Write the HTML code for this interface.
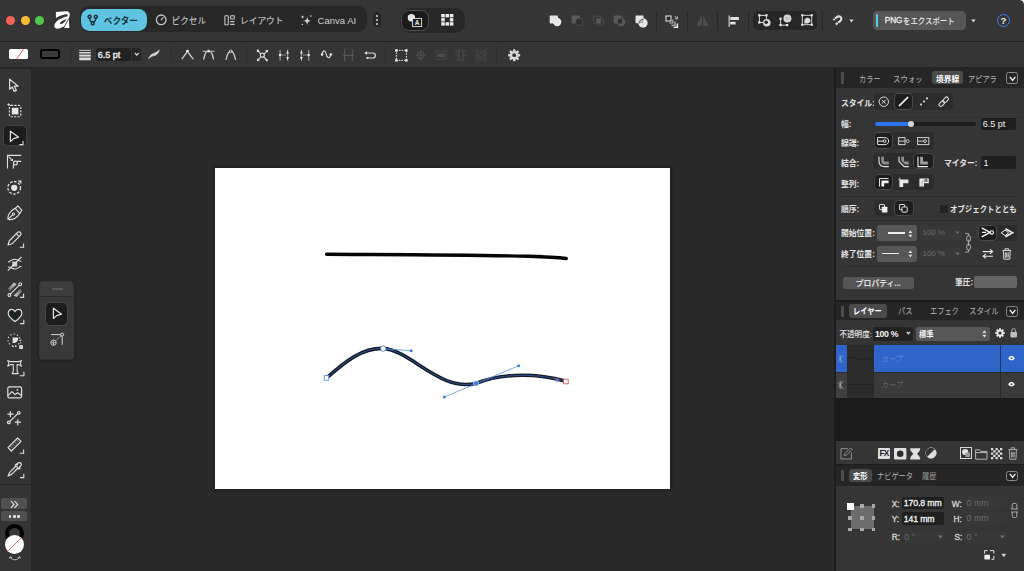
<!DOCTYPE html>
<html lang="ja">
<head>
<meta charset="utf-8">
<title>Affinity</title>
<style>
*{box-sizing:border-box;margin:0;padding:0}
html,body{width:1024px;height:571px;overflow:hidden;background:#292929}
body{position:relative;font-family:"Liberation Sans","Noto Sans CJK JP",sans-serif;font-size:9px;color:#d8d8d8;line-height:1}
.a{position:absolute}
.t{position:absolute;white-space:nowrap;line-height:12px;height:12px}
.b{font-weight:bold}
svg{position:absolute;overflow:visible}
#titlebar{left:0;top:0;width:1024px;height:41.7px;background:#353535;border-bottom:1.5px solid #242424}
#ctx{left:0;top:41.7px;width:1024px;height:26.8px;background:#353535;border-bottom:1.3px solid #252525}
#ltool{left:0;top:68.5px;width:32px;height:502.5px;background:#343434;border-right:1px solid #262626}
#canvas{left:31px;top:68px;width:805px;height:503px;background:#292929}
#page{left:215px;top:167.5px;width:454.6px;height:321.7px;background:#fff;box-shadow:0 0 3px 1px rgba(0,0,0,.3)}
#rp{left:835.7px;top:68px;width:188.3px;height:503px;background:#353535}
.sep{position:absolute;width:1px;background:#272727}
.ph{position:absolute;left:835.7px;width:188.3px;background:#252525}
.tabsel{position:absolute;background:#4a4a4a;border-radius:3px}
.grp{position:absolute;background:#2c2c2c;border-radius:4px}
.sel{position:absolute;background:#1d1d1d;border:1px solid #494949;border-radius:4px}
.inp{position:absolute;background:#222;border-radius:2px}
.dd{position:absolute;background:#575757;border-radius:2.5px}
.hl{position:absolute;height:1px;background:#3e3e3e}
.tb{font-size:8.4px;transform:scaleX(.86);transform-origin:0 50%}
.lb{font-size:8.4px;transform:scaleX(.93);transform-origin:0 50%;font-weight:bold;color:#e2e2e2}
.mb{width:11.8px;height:11.6px;border:1px solid #8a8a8a;border-radius:2.5px}
.ad{width:3.6px;height:3.6px;background:#a8a8a8}
.md{-webkit-text-stroke:0.3px currentColor}
</style>
</head>
<body>
<div class="a" id="titlebar"></div>
<div class="a" id="ctx"></div>
<div class="a" id="canvas"></div>
<div class="a" id="ltool"></div>
<div class="a" id="rp"></div>
<div class="a" id="page"></div>
<!--TITLEBAR-->
<!-- traffic lights -->
<div class="a" style="left:6.3px;top:15.5px;width:9px;height:9px;border-radius:50%;background:#f8625a"></div>
<div class="a" style="left:20.6px;top:15.5px;width:9px;height:9px;border-radius:50%;background:#fbbd34"></div>
<div class="a" style="left:34.8px;top:15.5px;width:9px;height:9px;border-radius:50%;background:#50c84b"></div>
<!-- logo -->
<svg style="left:50px;top:8px" width="25" height="24" viewBox="0 0 25 24">
 <g fill="#fff">
  <path d="M5.9 3.9L16.2 3.3C18.9 3.2 20.1 5 19.7 7.2 19.5 8.6 19 9.8 18.5 10.8L17.3 9.9C17.7 8.8 17.8 8 17.7 7.4 17.5 6.2 16.6 6 15.2 6.3 12 7 8.6 8.5 5.9 9.9Z"/>
  <path fill-rule="evenodd" d="M18.2 8.2C14.6 8.6 9.5 10.5 6.5 13.5 4.4 15.6 3.8 18.2 5 19.7 6.2 21.1 8.6 20.9 11 19.7 12.2 19.1 13.1 18.5 13.7 18.9L18.5 10.2ZM16.4 11.3C14 11.7 11.5 13 10.3 14.6 9.6 15.7 10.2 16.5 11.6 16 13.6 15.2 15.4 13.4 16.4 11.3Z"/>
  <path d="M18.9 10.9L19.3 19.9H14Z"/>
 </g>
</svg>
<!-- persona group -->
<div class="a" style="left:80px;top:6.4px;width:287px;height:25.8px;border-radius:9px;background:#272727"></div>
<div class="a" style="left:81.3px;top:9px;width:65.5px;height:22px;border-radius:8.5px;background:#5ec4e2"></div>
<svg style="left:86px;top:13px" width="14" height="14" viewBox="0 0 14 14" fill="none" stroke="#0f2a33" stroke-width="1.45">
 <circle cx="3.6" cy="3.7" r="1.5"/><circle cx="9.8" cy="3.7" r="1.5"/><circle cx="6.7" cy="10.2" r="1.5"/>
 <path d="M3.4 5.2C3.6 7.4 4.8 8.4 5.8 9M10 5.2C9.8 7.4 8.6 8.4 7.6 9"/>
</svg>
<div class="t b" style="left:103.8px;top:15px;color:#12303a;font-size:8.6px">ベクター</div>
<svg style="left:155px;top:14px" width="12" height="12" viewBox="0 0 12 12" fill="none" stroke="#c4c4c4" stroke-width="1.3">
 <circle cx="6.2" cy="5.8" r="4.8"/><path d="M6.2 5.8L8.2 3.6" stroke-linecap="round" stroke-width="1.1"/>
</svg>
<div class="t" style="left:171.6px;top:15px;color:#bababa;font-size:8.6px;font-weight:500">ピクセル</div>
<svg style="left:224px;top:14.5px" width="12" height="11" viewBox="0 0 12 11" fill="none" stroke="#c4c4c4" stroke-width="1.1">
 <rect x="0.9" y="0.8" width="3.4" height="9" rx="0.6"/><rect x="6.6" y="0.8" width="3.6" height="3.2" rx="0.5"/><path d="M6.2 6.6H10.6M6.2 9.4H10.6"/>
</svg>
<div class="t" style="left:240px;top:15px;color:#bababa;font-size:8.7px;font-weight:500">レイアウト</div>
<svg style="left:300px;top:13.5px" width="13" height="13" viewBox="0 0 13 13" fill="#d4d4d4">
 <path d="M7.2 2.4C7.7 5.6 8.4 6.3 11.6 6.8 8.4 7.3 7.7 8 7.2 11.2 6.7 8 6 7.3 2.8 6.8 6 6.3 6.7 5.6 7.2 2.4Z"/>
 <path d="M2.6 0.8C2.8 2.4 3.1 2.7 4.7 2.9 3.1 3.1 2.8 3.4 2.6 5 2.4 3.4 2.1 3.1 0.5 2.9 2.1 2.7 2.4 2.4 2.6 0.8Z"/>
 <circle cx="10.8" cy="2" r="0.8"/><circle cx="2.4" cy="10.6" r="0.75"/>
</svg>
<div class="t" style="left:317.6px;top:14.6px;color:#d0d0d0;font-size:9.5px">Canva AI</div>
<div class="a" style="left:373px;top:12px;width:8.4px;height:15.4px;border-radius:4px;background:#272727"></div>
<div class="a" style="left:376px;top:14.5px;width:2.4px;height:2.4px;border-radius:50%;background:#d8d8d8"></div>
<div class="a" style="left:376px;top:18.8px;width:2.4px;height:2.4px;border-radius:50%;background:#d8d8d8"></div>
<div class="a" style="left:376px;top:23.1px;width:2.4px;height:2.4px;border-radius:50%;background:#d8d8d8"></div>
<!-- group 2 -->
<div class="a" style="left:400px;top:7.5px;width:64.5px;height:25.3px;border-radius:10px;background:#272727"></div>
<div class="a" style="left:401.4px;top:9.7px;width:27.6px;height:21.2px;border-radius:7.5px;background:#1b1b1b;border:1px solid #505050"></div>
<svg style="left:406px;top:13px" width="17" height="15" viewBox="0 0 17 15">
 <circle cx="5.4" cy="4.8" r="3.7" fill="#e4e4e4"/>
 <rect x="6.6" y="5.4" width="9" height="8.2" fill="#1b1b1b" stroke="#e4e4e4" stroke-width="0.9"/>
 <text x="11.1" y="12.2" font-size="6.5" font-weight="bold" fill="#e4e4e4" text-anchor="middle" font-family="Liberation Sans, sans-serif">A</text>
</svg>
<svg style="left:441.2px;top:14.3px" width="12.6" height="11.8" viewBox="0 0 13.4 12.6" fill="#ececec">
 <rect x="0.2" y="0" width="3.8" height="3.6"/><rect x="4.8" y="0" width="3.8" height="3.6"/><rect x="9.4" y="0" width="3.8" height="3.6"/>
 <rect x="0.2" y="4.4" width="3.8" height="3.6"/><rect x="9.4" y="4.4" width="3.8" height="3.6"/>
 <rect x="0.2" y="8.8" width="3.8" height="3.6"/><rect x="4.8" y="8.8" width="3.8" height="3.6"/><rect x="9.4" y="8.8" width="3.8" height="3.6"/>
</svg>
<!-- boolean ops -->
<svg style="left:549px;top:14.5px" width="13" height="12" viewBox="0 0 13 12" fill="#e6e6e6"><rect x="0.7" y="0.6" width="8.2" height="8" rx="0.8"/><circle cx="8.2" cy="7" r="4.2"/></svg>
<svg style="left:570.5px;top:14.5px" width="13" height="12" viewBox="0 0 13 12"><rect x="0.7" y="0.6" width="8.2" height="8" rx="0.8" fill="#5a5a5a"/><circle cx="8.2" cy="7" r="3.7" fill="#2e2e2e" stroke="#4a4a4a" stroke-width="1"/></svg>
<svg style="left:591.5px;top:14.5px" width="13" height="12" viewBox="0 0 13 12" fill="none" stroke="#4a4a4a" stroke-width="1"><rect x="1.2" y="1.1" width="7.4" height="7.2" rx="0.6"/><circle cx="8.2" cy="7" r="3.7"/><path d="M4.6 3.4H8.6V8.3H4.8C4.2 6.2 4.2 4.8 4.6 3.4Z" fill="#5a5a5a" stroke="none"/></svg>
<svg style="left:613px;top:14.5px" width="13" height="12" viewBox="0 0 13 12"><defs><clipPath id="cpx"><rect x="0.7" y="0.6" width="8.2" height="8" rx="0.8"/></clipPath></defs><rect x="0.7" y="0.6" width="8.2" height="8" rx="0.8" fill="#585858"/><circle cx="8.2" cy="7" r="4.2" fill="#585858"/><circle cx="8.2" cy="7" r="3.4" fill="#2c2c2c" clip-path="url(#cpx)"/></svg>
<svg style="left:634.5px;top:14.5px" width="14" height="13" viewBox="0 0 14 13"><defs><clipPath id="cpd"><rect x="0.5" y="0.5" width="8" height="7.8"/></clipPath><clipPath id="cpe"><circle cx="8" cy="8" r="4.7"/></clipPath></defs><rect x="0.5" y="0.5" width="8" height="7.8" rx="0.6" fill="#e4e4e4"/><circle cx="8" cy="8" r="4.7" fill="#e4e4e4"/><circle cx="8" cy="8" r="3.7" fill="none" stroke="#3a3a3a" stroke-width="0.9" clip-path="url(#cpd)"/><path d="M3 7.4H7.6V3" fill="none" stroke="#8a8a8a" stroke-width="0.8" clip-path="url(#cpe)"/></svg>
<div class="sep" style="left:656px;top:10.5px;height:20.5px"></div>
<svg style="left:665px;top:14.5px" width="14" height="13" viewBox="0 0 14 13" fill="none" stroke="#dcdcdc" stroke-width="1.1"><rect x="1" y="1" width="5" height="5" fill="#2a2a2a"/><path d="M7.8 4.4V8H4.2" stroke="#bdbdbd"/><path d="M10 6.6V10.2H6.4" stroke="#cfcfcf"/><path d="M12.4 8.4V12.2H8.6" stroke="#ececec" stroke-width="1.5"/><path d="M9.4 0.8L12.2 3.6M12.4 1.4V3.8H10" stroke-width="0.9" stroke="#cfcfcf"/></svg>
<div class="sep" style="left:687px;top:10.5px;height:20.5px"></div>
<svg style="left:696px;top:15px" width="13" height="11" viewBox="0 0 13 11" fill="#4e4e4e"><path d="M5.8 0.2V10.8H0.4ZM7.2 0.2V10.8H12.6Z"/></svg>
<div class="sep" style="left:717px;top:10.5px;height:20.5px"></div>
<svg style="left:727.5px;top:14.5px" width="12" height="12" viewBox="0 0 12 12" fill="#e0e0e0"><rect x="0.6" y="0.4" width="1.1" height="11.4"/><rect x="2.2" y="2" width="8.8" height="3" rx="0.4"/><rect x="2.2" y="6.8" width="5.4" height="2.8" rx="0.4"/></svg>
<div class="sep" style="left:748px;top:10.5px;height:20.5px"></div>
<div class="a" style="left:753px;top:10.8px;width:64.4px;height:19.4px;border-radius:5px;background:#262626"></div>
<svg style="left:757.5px;top:14px" width="13" height="13" viewBox="0 0 13 13" fill="none" stroke="#d8d8d8" stroke-width="1"><rect x="1.4" y="1.4" width="7" height="7"/><g fill="#e8e8e8" stroke="none"><rect x="0.2" y="0.2" width="2.2" height="2.2"/><rect x="7.4" y="0.2" width="2.2" height="2.2"/><rect x="0.2" y="7.4" width="2.2" height="2.2"/></g><circle cx="8.8" cy="8.8" r="3.8" fill="#d8d8d8" stroke="none"/><circle cx="8.2" cy="8.2" r="1.8" fill="#262626" stroke="none"/></svg>
<svg style="left:779px;top:14px" width="13" height="13" viewBox="0 0 13 13" fill="none" stroke="#d8d8d8" stroke-width="1"><path d="M1.6 4.6V11.2H8.2"/><g fill="#e8e8e8" stroke="none"><rect x="0.4" y="3.6" width="2.2" height="2.2"/><rect x="0.4" y="10" width="2.2" height="2.2"/><rect x="7" y="10" width="2.2" height="2.2"/></g><circle cx="8.4" cy="4.4" r="4" fill="#d8d8d8" stroke="none"/><path d="M6 3.6H10.8M6 5.2H10.8" stroke="#aaa" stroke-width="0.6"/></svg>
<svg style="left:800.5px;top:14.4px" width="12.2" height="12.2" viewBox="0 0 13 13" fill="none" stroke="#d8d8d8" stroke-width="1"><rect x="1.4" y="1.4" width="10" height="10"/><g fill="#e8e8e8" stroke="none"><rect x="0.2" y="0.2" width="2.2" height="2.2"/><rect x="10.4" y="0.2" width="2.2" height="2.2"/><rect x="0.2" y="10.4" width="2.2" height="2.2"/><rect x="10.4" y="10.4" width="2.2" height="2.2"/></g><path d="M3.6 10V7.2C3.6 5.2 5.2 4 7 4 8.8 4 10 5.2 10 7 10 8.8 8.8 10 7 10Z" fill="#d8d8d8" stroke="none"/></svg>
<div class="sep" style="left:822px;top:10.5px;height:20.5px"></div>
<svg style="left:831.5px;top:15px" width="12" height="11" viewBox="0 0 12 11" fill="none" stroke="#dcdcdc" stroke-width="2.1"><path d="M3.8 9.4L7.9 6.3C9.6 5 9.8 3.2 8.6 2.1 7.4 1 5.8 1.2 4.4 2.4L1.4 5"/><path d="M2.2 2.9L3.9 4.9M5.3 7L7 9" stroke="#2e2e2e" stroke-width="0.8"/></svg>
<svg style="left:849.4px;top:18.8px" width="5" height="4" viewBox="0 0 5 4" fill="#d4d4d4"><path d="M0.200 0.500H4.600L2.400 3.600Z"/></svg>
<!-- export -->
<div class="a" style="left:872.8px;top:11px;width:93.2px;height:19.2px;border-radius:4.5px;background:#565656"></div>
<div class="a" style="left:875.8px;top:13.6px;width:2.6px;height:13.6px;border-radius:1px;background:#4fd2ea"></div>
<div class="t md" style="left:884.7px;top:14.8px;color:#ececec;font-size:8.2px">PNG</div>
<div class="t" style="left:903px;top:14.8px;color:#ececec;font-size:8.4px;font-weight:500;transform:scaleX(.885);transform-origin:0 50%">をエクスポート</div>
<svg style="left:970.6px;top:18.8px" width="5" height="4" viewBox="0 0 5 4" fill="#d4d4d4"><path d="M0.200 0.500H4.600L2.400 3.600Z"/></svg>
<div class="a" style="left:996.6px;top:13.8px;width:13.4px;height:13.4px;border-radius:50%;border:1.6px solid #3b7ce2"></div>
<div class="t b" style="left:997px;top:14.6px;width:12.6px;text-align:center;color:#f0f0f0;font-size:9.5px">?</div>
<div class="a" style="left:1020px;top:0;width:4px;height:4px;background:radial-gradient(circle at 0 100%,rgba(255,255,255,0) 3.3px,#fff 4.3px)"></div>
<!--/TITLEBAR-->
<!--CTX-->
<div class="a" style="left:9.1px;top:49px;width:19.4px;height:10px;border-radius:1.5px;background:#fff;overflow:hidden"></div>
<svg style="left:9px;top:49px" width="20" height="10" viewBox="0 0 20 10"><path d="M7.4 10.4L14.8 -0.4" stroke="#e8453c" stroke-width="0.9"/></svg>
<div class="a" style="left:40.4px;top:49.2px;width:19.8px;height:10px;border-radius:2.4px;background:#3a3a3a;border:2.5px solid #000"></div>
<div class="sep" style="left:70px;top:46px;height:17px;background:#2c2c2c"></div>
<svg style="left:79px;top:49px" width="12" height="12" viewBox="0 0 12 12" fill="#dcdcdc">
 <rect x="0.2" y="0.9" width="11.6" height="0.9"/><rect x="0.2" y="3" width="11.6" height="1.5"/><rect x="0.2" y="5.6" width="11.6" height="2"/><rect x="0.2" y="8.6" width="11.6" height="2.6" rx="0.4"/>
</svg>
<div class="inp" style="left:95.6px;top:47.8px;width:35.6px;height:13px;background:#212121"></div>
<div class="a" style="left:131.8px;top:47.8px;width:9px;height:13px;background:#262626;border-radius:0 2px 2px 0"></div>
<div class="t" style="left:97.8px;top:48.6px;color:#f0f0f0;font-size:9px;-webkit-text-stroke:0.35px #f0f0f0">6.5 pt</div>
<svg style="left:133.5px;top:52px" width="6" height="5" viewBox="0 0 6 5" fill="none" stroke="#d8d8d8" stroke-width="1.2"><path d="M0.9 1L2.8 3.1 4.7 1"/></svg>
<svg style="left:148px;top:49px" width="12" height="11" viewBox="0 0 12 11"><path d="M0.5 9.8C2.4 5.2 4.4 5 6.2 4.2 8.2 3.4 9.8 2.6 11.3 0.8 10.8 4 9.2 5.5 7.2 6.3 5.2 7.100 3 7 0.5 9.8Z" fill="#d4d4d4" stroke="#d4d4d4" stroke-width="0.6" stroke-linejoin="round"/></svg>
<div class="sep" style="left:171px;top:46px;height:17px;background:#2c2c2c"></div>
<!-- node type icons -->
<svg style="left:181px;top:49px" width="13" height="12" viewBox="0 0 13 12" fill="none" stroke="#cacaca" stroke-width="1.35" stroke-linecap="round"><path d="M5.4 4L1.1 9.7M7.6 4L11.9 9.7"/><circle cx="6.5" cy="2.2" r="1.45" fill="#ececec" stroke="none"/></svg>
<svg style="left:202px;top:49px" width="14" height="12" viewBox="0 0 14 12" fill="none" stroke="#cacaca" stroke-width="1.35" stroke-linecap="round"><path d="M4.2 3.2C2.8 5 2.2 7.4 1.8 10M9 3.2C10.400 5 11 7.4 11.4 10"/><path d="M1.200 2.200H4.600M8.600 2.200H12.200" stroke-width="1.1"/><circle cx="6.6" cy="2.2" r="1.4" fill="#ececec" stroke="none"/></svg>
<svg style="left:224.5px;top:49px" width="12" height="12" viewBox="0 0 12 12" fill="none" stroke="#cacaca" stroke-width="1.35" stroke-linecap="round"><path d="M1.100 10.4C2 6.600 3.200 3.400 4.600 2.600M10.500 10.4C9.600 6.600 8.400 3.400 7 2.600"/><circle cx="5.8" cy="2.2" r="1.3" stroke-width="1"/></svg>
<div class="sep" style="left:246px;top:46px;height:17px;background:#2c2c2c"></div>
<svg style="left:256px;top:48.5px" width="13" height="13" viewBox="0 0 13 13" fill="none" stroke="#d8d8d8" stroke-width="1.1"><path d="M2 1.9L10.7 11M11.2 1.8L1.7 11.2"/><circle cx="6.3" cy="6.2" r="2" fill="#333" stroke-width="1.2"/><circle cx="1.9" cy="1.8" r="1.2" fill="#e8e8e8" stroke="none"/><circle cx="10.7" cy="11.1" r="1.2" fill="#e8e8e8" stroke="none"/><path d="M12.2 0.8L9.2 1.6 11.4 3.8ZM0.8 12.2L1.6 9.2 3.8 11.4Z" fill="#e8e8e8" stroke="none"/></svg>
<svg style="left:278px;top:48.5px" width="12" height="13" viewBox="0 0 12 13" fill="none" stroke="#d0d0d0" stroke-width="1"><path d="M2.1 0.8V11.8M9.6 0.8V11.8" stroke="#a8a8a8"/><path d="M2.1 6H8" stroke="#8a8a8a"/><circle cx="2.1" cy="6" r="1.2" fill="#e8e8e8" stroke="none"/><path d="M9.6 1.6L11 4.6H8.2ZM9.6 11L11 8H8.2Z" fill="#ececec" stroke="none"/></svg>
<svg style="left:299px;top:48.5px" width="12" height="13" viewBox="0 0 12 13" fill="none" stroke="#d0d0d0" stroke-width="1"><path d="M2.4 0.8V11.8M9.7 0.8V11.8" stroke="#a8a8a8"/><path d="M4 6H9.7" stroke="#8a8a8a"/><circle cx="9.7" cy="6" r="1.2" fill="#e8e8e8" stroke="none"/><path d="M2.4 1.6L3.8 4.6H1ZM2.4 11L3.8 8H1Z" fill="#ececec" stroke="none"/></svg>
<svg style="left:320px;top:49px" width="13" height="12" viewBox="0 0 13 12" fill="none" stroke="#d8d8d8" stroke-width="1.1"><path d="M2 5.5C2.8 1 4.8 0.6 6 4.6 7.2 9.4 9.6 10.6 10.8 5.5"/><circle cx="2" cy="5.5" r="1.3" fill="#ececec" stroke="none"/><circle cx="10.8" cy="5.5" r="1.3" fill="#ececec" stroke="none"/></svg>
<svg style="left:342.5px;top:48.5px" width="12" height="13" viewBox="0 0 12 13" fill="none" stroke="#595959" stroke-width="1"><path d="M1.6 0.4V12.2M9.4 0.4V12.2M0 6.4H11"/></svg>
<svg style="left:364px;top:50.5px" width="13" height="9" viewBox="0 0 13 9" fill="none" stroke="#d8d8d8" stroke-width="1.2"><path d="M1.6 2H8.6C10.6 2 11.4 3.2 11.4 4.4 11.4 5.8 10.6 7 8.6 7H3.6"/><path d="M0.2 2L3 0.2V3.8Z" fill="#e8e8e8" stroke="none"/><circle cx="3.4" cy="7" r="1.1" fill="#e8e8e8" stroke="none"/></svg>
<div class="sep" style="left:385px;top:46px;height:17px;background:#2c2c2c"></div>
<svg style="left:394.5px;top:48.5px" width="13" height="13" viewBox="0 0 13 13" fill="none" stroke="#e0e0e0" stroke-width="1"><rect x="1.4" y="1.4" width="10" height="10" stroke-dasharray="1.6 1"/><g fill="#f0f0f0" stroke="none"><rect x="0.2" y="0.2" width="2.4" height="2.4"/><rect x="10.2" y="0.2" width="2.4" height="2.4"/><rect x="0.2" y="10.2" width="2.4" height="2.4"/><rect x="10.2" y="10.2" width="2.4" height="2.4"/></g></svg>
<svg style="left:415px;top:48.5px" width="12" height="13" viewBox="0 0 12 13" fill="none" stroke="#505050" stroke-width="0.9"><circle cx="5.8" cy="6.2" r="3.4"/><path d="M5.8 0.6V12M0.4 6.2H11.2"/></svg>
<svg style="left:434.5px;top:48.5px" width="12" height="13" viewBox="0 0 12 13" fill="none" stroke="#4c4c4c" stroke-width="0.9"><rect x="1" y="2" width="10" height="8.6" stroke-dasharray="1.4 1"/><ellipse cx="6" cy="6.3" rx="3.2" ry="1.6" fill="#4c4c4c"/><path d="M2.4 0.4V12.2M9.6 0.4V12.2" stroke-dasharray="1 1"/></svg>
<svg style="left:454.5px;top:48.5px" width="12" height="13" viewBox="0 0 12 13" fill="none" stroke="#4c4c4c" stroke-width="0.9"><rect x="1" y="1.6" width="10" height="9.4" stroke-dasharray="1.4 1"/><path d="M4 0.4V12.2M8 0.4V12.2"/><path d="M1.6 6.3H4M8 6.3H10.4"/></svg>
<svg style="left:474.5px;top:48.5px" width="12" height="13" viewBox="0 0 12 13" fill="none" stroke="#4c4c4c" stroke-width="0.9"><rect x="1" y="1.6" width="10" height="9.4" stroke-dasharray="1.4 1"/><circle cx="6" cy="6.3" r="2.6"/><path d="M2.4 0.4V12.2M9.6 0.4V12.2" stroke-dasharray="1 1"/></svg>
<div class="sep" style="left:496px;top:46px;height:17px;background:#2c2c2c"></div>
<svg style="left:507.5px;top:48.5px" width="12.4" height="12.4" viewBox="-6.2 -6.2 12.4 12.4"><g fill="#d8d8d8"><circle r="4.3"/><g id="gt"><rect x="-1.25" y="-6" width="2.5" height="12" rx="0.5"/></g><use href="#gt" transform="rotate(45)"/><use href="#gt" transform="rotate(90)"/><use href="#gt" transform="rotate(135)"/></g><circle r="1.9" fill="#323232"/></svg>
<!--/CTX-->
<!--LTOOL-->
<!-- left tools -->
<svg style="left:8.2px;top:77.8px" width="13" height="15" viewBox="0 0 13 15" fill="none" stroke="#dedede" stroke-width="1.2" stroke-linejoin="round"><path d="M1.6 1.2V11.2L4.2 9 6.2 13.4 8.4 12.4 6.4 8.2H10.2Z"/></svg>
<svg style="left:7px;top:103px" width="16" height="16" viewBox="0 0 16 16" fill="none" stroke="#dedede" stroke-width="1.1"><rect x="2.4" y="2.4" width="11.4" height="11.4" rx="1.6" stroke-dasharray="2.2 1.2"/><rect x="4.8" y="4.8" width="6.6" height="6.6" fill="#e6e6e6" stroke="none"/><path d="M0.2 1.6H3M1.6 0.2V3" stroke-width="0.9"/></svg>
<div class="a" style="left:2.5px;top:124.6px;width:24.8px;height:21.8px;border-radius:4.5px;background:#1c1c1c;border:1px solid #414141"></div>
<svg style="left:9px;top:130px" width="15" height="16" viewBox="0 0 15 16" fill="none" stroke="#e4e4e4" stroke-width="1.2" stroke-linejoin="round"><path d="M1.4 1.2V11.6L4.6 8.6 9.6 7.2Z"/><path d="M10.4 14.6H14V11" stroke-width="1.1" stroke-linejoin="miter"/></svg>
<svg style="left:6.3px;top:154px" width="16" height="15" viewBox="0 0 16 15" fill="none" stroke="#dedede" stroke-width="1.1"><path d="M1.5 14.6V1.4H15.2"/><path d="M2.6 2.6L5.6 5.6" stroke-width="1.2"/><path d="M7 4.400V7H4.200Z" fill="#e4e4e4" stroke="none"/><circle cx="9.4" cy="9.1" r="1.9" stroke-width="1.2"/><path d="M10.800 7.300H15.200M7.600 10.400L7.200 14.600" stroke-width="1.2"/></svg>
<svg style="left:6px;top:179px" width="17" height="17" viewBox="0 0 17 17" fill="none" stroke="#dedede" stroke-width="1.3"><circle cx="8.2" cy="8.8" r="6.3" stroke-dasharray="2.6 1.5"/><circle cx="8.2" cy="8.8" r="3.1" fill="#e6e6e6" stroke="none"/><path d="M11.8 1.4H15.4V5Z" fill="#e6e6e6" stroke="none"/></svg>
<svg style="left:7px;top:205px" width="16" height="16" viewBox="0 0 16 16" fill="none" stroke="#dedede" stroke-width="1.15" stroke-linejoin="round" stroke-linecap="round"><path d="M0.9 14.3C0.2 10.2 3.6 5.2 8.3 3.4L12.7 8.5C10.4 12.8 5.2 15.4 0.9 14.3Z"/><path d="M8.3 3.4L10.9 0.9L14.8 5.4L12.7 8.5"/><path d="M1.4 13.9L5.6 9.9"/><circle cx="6.4" cy="9.1" r="1.1"/></svg>
<svg style="left:7px;top:231px" width="17" height="17" viewBox="0 0 17 17" fill="none" stroke="#dedede" stroke-width="1.2" stroke-linejoin="round"><path d="M10.6 1.4C11.4 0.6 12.6 0.8 13.4 1.6 14.2 2.4 14.2 3.6 13.6 4.2L5 12.8 1 14 2.2 10ZM9.4 2.8L12.2 5.6"/><path d="M12.8 16.2H16.6V12.4" stroke-width="1.1" stroke-linejoin="miter"/></svg>
<svg style="left:7px;top:256px" width="16" height="16" viewBox="0 0 16 16" fill="none" stroke="#dedede" stroke-width="1.1"><path d="M1 6C3.4 6 3.6 3.2 7.4 3.2 11.2 3.2 11.4 5.6 14.4 5.2M1 11C4 10.6 4.2 13 8 13 11.8 13 12 10.2 14.4 10.2"/><rect x="5.2" y="5.6" width="5" height="5" fill="#cfcfcf" stroke="none"/><path d="M0.8 14.6L14.4 1"/></svg>
<svg style="left:6.5px;top:282px" width="18" height="16" viewBox="0 0 18 16" fill="none" stroke="#dedede" stroke-width="1.1"><defs><linearGradient id="gg1" x1="0" y1="1" x2="1" y2="0"><stop offset="0" stop-color="#e0e0e0" stop-opacity="0.25"/><stop offset="1" stop-color="#e0e0e0" stop-opacity="0.95"/></linearGradient><linearGradient id="gg2" x1="0" y1="1" x2="1" y2="0"><stop offset="0" stop-color="#e0e0e0" stop-opacity="0.95"/><stop offset="1" stop-color="#e0e0e0" stop-opacity="0.25"/></linearGradient></defs><path d="M1 6.4L6.8 0.6 9.6 2.2 2.6 9.2Z" fill="url(#gg1)" stroke="none"/><path d="M6.6 13.6L13.4 6.8 15 9.6 9.6 15Z" fill="url(#gg2)" stroke="none"/><path d="M3 12.4L12.6 2.8"/><circle cx="2.4" cy="13" r="1.4" fill="#333"/><circle cx="13.2" cy="2.2" r="1.4" fill="#333"/><path d="M13 15.4H16.6V11.8" stroke-width="1.1"/></svg>
<svg style="left:6.5px;top:308px" width="18" height="17" viewBox="0 0 18 17" fill="#1d2224" stroke="#dedede" stroke-width="1.2" stroke-linejoin="round"><path d="M8 13.6C4.4 11 1.2 8.4 1.2 5.2 1.2 3 2.8 1.4 4.6 1.4 6.2 1.4 7.4 2.4 8 3.6 8.6 2.4 9.8 1.4 11.4 1.4 13.2 1.4 14.8 3 14.8 5.2 14.8 8.4 11.6 11 8 13.6Z"/><path d="M13 15.6H16.8V11.8" fill="none" stroke-width="1.1" stroke-linejoin="miter"/></svg>
<svg style="left:6.5px;top:333px" width="18" height="18" viewBox="0 0 18 18" fill="none" stroke="#dedede" stroke-width="1.2"><circle cx="7" cy="7" r="6" stroke-dasharray="1.2 2.2"/><path d="M5.6 4.4H11.2C11.2 8 9.4 10 5.6 10Z" fill="#e6e6e6" stroke="none"/><path d="M5.4 13.6H9.8M13.8 6.6V10.4" stroke-dasharray="1.4 1.2" stroke-width="1"/><rect x="12.6" y="12.6" width="3" height="3" fill="#cfcfcf" stroke-width="0.8"/></svg>
<svg style="left:6.5px;top:359px" width="18" height="18" viewBox="0 0 18 18" fill="none" stroke="#dedede" stroke-width="1.05" stroke-linejoin="round"><path d="M0.7 1.6L3.1 2.6L12.1 2.6L14.5 1.6L13.3 4.4L14.5 7.2L11.9 5.6L10.1 5.6L10.1 12.4L11.3 14.6L5.1 14.6L6.3 12.4L6.3 5.6L3.5 5.6L0.7 7.2L1.9 4.4Z"/><path d="M12.8 16.7H16.9V12.8" stroke-width="1.1" stroke-linejoin="miter"/></svg>
<svg style="left:7px;top:386px" width="16" height="13" viewBox="0 0 16 13" fill="none" stroke="#dedede" stroke-width="1.2" stroke-linejoin="round"><rect x="0.8" y="0.8" width="13.8" height="11" rx="1.6"/><path d="M1 9.6L5 5.6 8 8.6 10.6 6.8 14.4 9.6"/><circle cx="10.4" cy="3.8" r="0.9" fill="#dedede" stroke="none"/></svg>
<svg style="left:7px;top:411px" width="15" height="15" viewBox="0 0 15 15" fill="none" stroke="#dedede" stroke-width="1.2"><path d="M0.4 3.2H6.6M3.4 0.2V6.2M7.8 11.2H14M10.8 8.2V14.4M2.6 10.6L11 2.4"/><circle cx="1.8" cy="11.4" r="1.3" fill="#333"/><circle cx="11.8" cy="1.8" r="1.3" fill="#333"/></svg>
<svg style="left:7px;top:436.5px" width="17" height="17" viewBox="0 0 17 17" fill="none" stroke="#dedede" stroke-width="1.2" stroke-linejoin="round"><path d="M1 10.6L10.6 1 14 4.4 4.4 14Z"/><path d="M4 9.4L5.2 10.6M6 7.4L7.2 8.6M8 5.4L9.2 6.6M10 3.4L11.2 4.6" stroke-width="0.9"/><path d="M12.8 16.2H16.6V12.4" stroke-width="1.1" stroke-linejoin="miter"/></svg>
<svg style="left:6.5px;top:462px" width="18" height="17" viewBox="0 0 18 17" fill="none" stroke="#dedede" stroke-width="1.2" stroke-linejoin="round"><path d="M10.8 1.2C11.8 0.2 13.4 0.4 14 1.4 14.6 2.2 14.4 3.4 13.6 4L12.4 5 13.2 5.8 12 7 8.2 3.2 9.4 2 10.2 2.8ZM9 4L2.6 10.4 1 14 4.6 12.4 11 6"/><path d="M13 15.6H16.8V11.8" stroke-width="1.1" stroke-linejoin="miter"/></svg>
<div class="a" style="left:0;top:484px;width:31px;height:1px;background:#262626"></div>
<div class="a" style="left:1.4px;top:497.8px;width:25.8px;height:11px;border-radius:2px;background:#505050"></div>
<svg style="left:10px;top:499.5px" width="9" height="9" viewBox="0 0 9 9" fill="none" stroke="#ececec" stroke-width="1.1"><path d="M1 1L4 4.4 1 7.8M4.6 1L7.6 4.4 4.6 7.8"/></svg>
<div class="a" style="left:1.4px;top:511.4px;width:25.8px;height:10px;border-radius:2px;background:#505050"></div>
<div class="a" style="left:8.6px;top:515.2px;width:2.6px;height:2.6px;border-radius:50%;background:#ececec"></div>
<div class="a" style="left:13px;top:515.2px;width:2.6px;height:2.6px;border-radius:50%;background:#ececec"></div>
<div class="a" style="left:17.4px;top:515.2px;width:2.6px;height:2.6px;border-radius:50%;background:#ececec"></div>
<div class="a" style="left:4.8px;top:523.8px;width:19px;height:19px;border-radius:50%;border:4.9px solid #000;background:#383838"></div>
<div class="a" style="left:4.8px;top:535px;width:19px;height:19px;border-radius:50%;background:#fff;overflow:hidden"></div>
<svg style="left:4.8px;top:535px" width="19" height="19" viewBox="0 0 19 19"><path d="M2.6 16.4L16.4 2.6" stroke="#ee5a50" stroke-width="0.9"/></svg>
<svg style="left:8.5px;top:555.5px" width="12" height="6" viewBox="0 0 12 6" fill="none" stroke="#cfcfcf" stroke-width="0.9"><path d="M1.2 1.2C3.4 4.6 8.4 4.6 10.6 1.2M0.4 2.6L1.2 0.8 3 1.6M11.4 2.6L10.6 0.8 8.8 1.6"/></svg>
<!-- floating palette -->
<div class="a" style="left:40.2px;top:282px;width:33.2px;height:76.6px;border-radius:3px;background:#383838;box-shadow:0 0 0 0.6px #454545,0 1px 4px rgba(0,0,0,.5)"></div>
<div class="a" style="left:40.2px;top:282px;width:33.2px;height:14.5px;border-radius:3px 3px 0 0;background:#3c3c3c;border-bottom:1px solid #2c2c2c"></div>
<div class="a" style="left:51.5px;top:288.4px;width:11px;height:1.8px;border-radius:1px;background:#565656"></div>
<div class="a" style="left:45.3px;top:301.6px;width:23.2px;height:24px;border-radius:5.5px;background:#1c1c1c;border:1px solid #474747"></div>
<svg style="left:51.5px;top:307px" width="12" height="13" viewBox="0 0 12 13" fill="none" stroke="#e4e4e4" stroke-width="1.2" stroke-linejoin="round"><path d="M1.4 1.2V11.6L4.6 8.6 9.6 7.2Z"/></svg>
<svg style="left:50px;top:332px" width="15" height="15" viewBox="0 0 15 15" fill="none" stroke="#d8d8d8" stroke-width="1"><path d="M1 2.600H10.800M12.200 4.200V12.800"/><circle cx="12.2" cy="2.6" r="1.5"/><path d="M11 3.800L5.400 9" stroke-dasharray="1.3 1.1"/><circle cx="3.5" cy="10.700" r="2.700" stroke-width="0.9"/><path d="M3.500 8.200V13.200M1 10.700H6" stroke-width="0.7"/></svg>
<!--/LTOOL-->
<!--CANVAS-->
<svg style="left:0;top:0" width="1024" height="571" viewBox="0 0 1024 571" fill="none">
 <path d="M326.6 254.3C400 254.7 470 254.7 528 256.3 545 256.8 558 257.5 566.2 258.5" stroke="#050505" stroke-width="3.4" stroke-linecap="round"/>
 <path d="M327 377.6C346 361 362 348 383 348.4 411 350.4 440 392 476 383.4 505 372 540 374 565 381" stroke="#161d2b" stroke-width="3.6" stroke-linecap="round"/>
 <path d="M327 377.6C346 361 362 348 383 348.4 411 350.4 440 392 476 383.4 505 372 540 374 565 381" stroke="#3f6fc4" stroke-width="0.6"/>
 <path d="M383.3 348.6L411.2 350.8M444.3 397L518.6 365.8" stroke="#5a8fe0" stroke-width="0.8"/>
 <path d="M553 378L560 380" stroke="#c0504a" stroke-width="1"/>
 <circle cx="411.2" cy="350.8" r="1.5" fill="#3f7be0"/>
 <circle cx="444.3" cy="397" r="1.5" fill="#3f7be0"/>
 <circle cx="518.6" cy="365.8" r="1.5" fill="#3f7be0"/>
 <circle cx="476" cy="383.4" r="2.6" fill="#3f7be0" stroke="#dfe8fa" stroke-width="0.6"/>
 <circle cx="557" cy="380" r="1.7" fill="#3f7be0"/>
 <circle cx="383.3" cy="348.6" r="2.7" fill="#fff" stroke="#4a82e0" stroke-width="0.9"/>
 <rect x="324.2" y="375.6" width="4.6" height="4.6" fill="#fff" stroke="#4a82e0" stroke-width="0.8"/>
 <rect x="563.6" y="379.2" width="4.6" height="4.6" fill="#fff" stroke="#e0574e" stroke-width="0.9"/>
</svg>
<!--/CANVAS-->
<!--RP1-->
<div class="a" style="left:833.5px;top:68px;width:2.4px;height:503px;background:#1d1d1d"></div>
<div class="ph" style="top:67.5px;height:20.2px"></div>
<div class="a" style="left:841.4px;top:72px;width:2.2px;height:12px;border-radius:1px;background:#4d4d4d"></div>
<div class="t tb" style="left:858.6px;top:72.6px;color:#b4b4b4">カラー</div>
<div class="t tb" style="left:893.4px;top:72.6px;color:#b4b4b4;transform:scaleX(.89)">スウォッ</div>
<div class="tabsel" style="left:932.3px;top:71.2px;width:30.3px;height:13.3px"></div>
<div class="t tb b" style="left:936.2px;top:72.6px;color:#fff;transform:scaleX(.92)">境界線</div>
<div class="t tb" style="left:967.8px;top:72.6px;color:#b4b4b4">アピアラ</div>
<div class="a mb" style="left:1006.2px;top:72.4px"></div>
<svg style="left:1008.6px;top:75.6px" width="8" height="6" viewBox="0 0 8 6" fill="none" stroke="#f0f0f0" stroke-width="1.4"><path d="M0.9 0.8L3.6 4.4 6.3 0.8"/></svg>
<!-- style row -->
<div class="t lb" style="left:840.7px;top:96.6px">スタイル:</div>
<div class="grp" style="left:874px;top:92.8px;width:78.8px;height:16.8px"></div>
<svg style="left:877.9px;top:95.5px" width="12" height="12" viewBox="0 0 12 12" fill="none" stroke="#dcdcdc" stroke-width="1"><circle cx="5.8" cy="5.7" r="4.7"/><path d="M4 3.9L7.6 7.5M7.6 3.9L4 7.5"/></svg>
<div class="sel" style="left:894px;top:93px;width:19.2px;height:16.6px"></div>
<svg style="left:898px;top:96px" width="12" height="11" viewBox="0 0 12 11"><path d="M1.4 9.6L9.8 1.4" stroke="#f4f4f4" stroke-width="1.5" stroke-linecap="round"/></svg>
<svg style="left:918.6px;top:96px" width="11" height="11" viewBox="0 0 11 11" fill="#d8d8d8"><circle cx="2" cy="8.6" r="1.05"/><circle cx="5" cy="5.5" r="1.05"/><circle cx="8" cy="2.4" r="1.05"/></svg>
<svg style="left:938px;top:95.6px" width="12" height="12" viewBox="0 0 12 12" fill="none" stroke="#dcdcdc" stroke-width="1.1"><rect x="-1.6" y="-3.2" width="3.6" height="6.4" rx="1.8" transform="translate(3.8 7.6) rotate(45) translate(-0.2 0)"/><rect x="-1.6" y="-3.2" width="3.6" height="6.4" rx="1.8" transform="translate(7.6 3.8) rotate(45) translate(-0.2 0)"/></svg>
<div class="hl" style="left:874px;top:114.2px;width:150px;background:#393939"></div>
<!-- width row -->
<div class="t lb" style="left:840.7px;top:118.2px">幅:</div>
<div class="a" style="left:875px;top:121.6px;width:101px;height:4.6px;border-radius:2.3px;background:#1d1d1d"></div>
<div class="a" style="left:875px;top:121.6px;width:37px;height:4.6px;border-radius:2.3px;background:#2f72f0"></div>
<div class="a" style="left:907.7px;top:120.7px;width:6.4px;height:6.4px;border-radius:50%;background:#d6d6d6"></div>
<div class="inp" style="left:981px;top:118px;width:35.4px;height:12px;background:#1f1f1f"></div>
<div class="t" style="left:982.8px;top:118.2px;color:#f0f0f0;font-size:9px;font-weight:500">6.5 pt</div>
<!-- cap row -->
<div class="t lb" style="left:840.7px;top:136.6px">線端:</div>
<div class="grp" style="left:873.4px;top:132.4px;width:60.4px;height:16.4px"></div>
<div class="sel" style="left:874px;top:132.4px;width:19px;height:16.4px"></div>
<svg style="left:877.2px;top:136.6px" width="13" height="9" viewBox="0 0 13 9" fill="none" stroke="#e4e4e4" stroke-width="1"><path d="M0.6 0.6H7.8C10.2 0.6 11.6 2 11.6 4.1 11.6 6.2 10.2 7.6 7.8 7.6H0.6Z"/><path d="M0.6 4.1H6.2"/><circle cx="7.6" cy="4.1" r="1.4"/></svg>
<svg style="left:897.6px;top:136.6px" width="12" height="9" viewBox="0 0 12 9" fill="none" stroke="#d0d0d0" stroke-width="1"><rect x="0.6" y="0.6" width="6.4" height="7"/><path d="M0.6 4.1H7"/><circle cx="9.6" cy="4.1" r="1.5" stroke-width="0.9"/></svg>
<svg style="left:917.2px;top:136.6px" width="13" height="9" viewBox="0 0 13 9" fill="none" stroke="#d0d0d0" stroke-width="1"><rect x="0.6" y="0.6" width="11.2" height="7"/><path d="M0.6 4.1H6.6"/><circle cx="8" cy="4.1" r="1.4"/></svg>
<!-- join row -->
<div class="t lb" style="left:840.7px;top:157px">結合:</div>
<div class="grp" style="left:873.4px;top:153px;width:60.4px;height:16.4px"></div>
<div class="sel" style="left:913.4px;top:153px;width:20.4px;height:16.4px"></div>
<svg style="left:877.6px;top:155.8px" width="13" height="12" viewBox="0 0 13 12" fill="none" stroke="#e0e0e0" stroke-width="1.1"><path d="M3.2 0.8H6V5.6H10.8V8.6H7C4.6 8.6 3.2 7.2 3.2 4.8Z" fill="#8c8c8c" stroke="none"/><path d="M1 0.8V5C1 8.4 3.2 10.6 6.6 10.6H10.8"/></svg>
<svg style="left:897.6px;top:155.8px" width="13" height="12" viewBox="0 0 13 12" fill="none" stroke="#e0e0e0" stroke-width="1.1"><path d="M3.2 0.8H6V5.6H10.8V8.6H7L3.2 4.8Z" fill="#8c8c8c" stroke="none"/><path d="M1 0.8V5.4L6.2 10.6H10.8"/></svg>
<svg style="left:917.4px;top:155.8px" width="13" height="12" viewBox="0 0 13 12" fill="none" stroke="#f0f0f0" stroke-width="1.1"><path d="M3.2 0.8H6V5.6H10.8V8.6H3.2Z" fill="#a0a0a0" stroke="none"/><path d="M1 0.8V10.6H10.8"/></svg>
<div class="t lb" style="left:944.2px;top:157px">マイター:</div>
<div class="inp" style="left:981px;top:156px;width:35.4px;height:12.6px;background:#1f1f1f"></div>
<div class="t" style="left:983.4px;top:156.6px;color:#f0f0f0;font-size:9px;font-weight:500">1</div>
<!-- align row -->
<div class="t lb" style="left:840.7px;top:177.8px">整列:</div>
<div class="grp" style="left:873.4px;top:173.6px;width:60.4px;height:16.8px"></div>
<div class="sel" style="left:874px;top:173.6px;width:19.4px;height:16.8px"></div>
<svg style="left:878.8px;top:178.4px" width="11" height="10" viewBox="0 0 11 10"><path d="M0.5 8.6V0.5H9.6" fill="none" stroke="#f0f0f0" stroke-width="0.9"/><path d="M2.4 2.4H9.6V5.2H5.2V8.6H2.4Z" fill="#f4f4f4"/></svg>
<svg style="left:898.2px;top:177px" width="11" height="11" viewBox="0 0 11 11"><path d="M1.4 2.4H10.4V6.2H5.2V10H1.4Z" fill="#e8e8e8"/><path d="M1.8 2.4V0.4M0.2 2.8H3" stroke="#d8d8d8" stroke-width="0.8"/></svg>
<svg style="left:918.8px;top:178.4px" width="11" height="10" viewBox="0 0 11 10"><path d="M0.4 0.4H9.8V5.2H5V8.6H0.4Z" fill="#e8e8e8"/><path d="M3.2 8.6V3.2H9.8" fill="none" stroke="#9a9a9a" stroke-width="0.7"/><rect x="5.4" y="1.2" width="3" height="2.4" fill="#666"/></svg>
<div class="hl" style="left:841px;top:196px;width:176px;background:#2a2a2a"></div>
<!-- order row -->
<div class="t lb" style="left:840.7px;top:203.4px">順序:</div>
<div class="grp" style="left:873.6px;top:200px;width:40px;height:16.4px"></div>
<div class="sel" style="left:894px;top:200px;width:19.6px;height:16.4px"></div>
<svg style="left:879.4px;top:203.6px" width="9" height="9" viewBox="0 0 9 9"><rect x="0.5" y="0.5" width="5" height="5" rx="0.5" fill="none" stroke="#e8e8e8" stroke-width="0.9"/><rect x="2.8" y="2.8" width="5.6" height="5.6" rx="0.5" fill="#f0f0f0"/></svg>
<svg style="left:899.2px;top:203.6px" width="9" height="9" viewBox="0 0 9 9" fill="none" stroke="#f0f0f0" stroke-width="0.9"><rect x="0.5" y="0.5" width="5.2" height="5.2" rx="0.5"/><rect x="3" y="3" width="5.2" height="5.2" rx="0.5" fill="#1d1d1d"/></svg>
<div class="a" style="left:939.8px;top:205.2px;width:7.8px;height:7.8px;border-radius:1.6px;background:#222"></div>
<div class="t lb" style="left:949.6px;top:203.4px;transform:scaleX(.885)">オブジェクトととも</div>
<div class="hl" style="left:841px;top:220.4px;width:176px;background:#2a2a2a"></div>
<!-- start / end -->
<div class="t lb" style="left:840.7px;top:226.8px">開始位置:</div>
<div class="dd" style="left:877px;top:225.2px;width:39.8px;height:15.8px"></div>
<div class="a" style="left:887.8px;top:232.4px;width:17px;height:1.6px;background:#ececec"></div>
<svg style="left:908.4px;top:228.6px" width="5" height="10" viewBox="0 0 5 10" fill="#e0e0e0"><path d="M0.5 4L2.4 1.2 4.3 4ZM0.5 5.8L2.4 8.6 4.3 5.8Z"/></svg>
<div class="a" style="left:919px;top:226px;width:41.6px;height:14.4px;border-radius:2px;background:#383838"></div>
<div class="t" style="left:922.6px;top:227px;color:#6c6c6c;font-size:8px;letter-spacing:-0.1px">100 %</div>
<svg style="left:954.8px;top:231.4px" width="5" height="4" viewBox="0 0 5 4" fill="#6a6a6a"><path d="M0.3 0.6H4.5L2.4 3.4Z"/></svg>
<div class="grp" style="left:977.6px;top:224.6px;width:39px;height:16px"></div>
<div class="sel" style="left:977.6px;top:224.6px;width:19.2px;height:16px"></div>
<svg style="left:980.6px;top:227.2px" width="14" height="11" viewBox="0 0 14 11" fill="none" stroke="#f4f4f4" stroke-width="1.5" stroke-linecap="round"><path d="M1.2 1.2L9 5.4M1.2 9.6L9 5.4"/><path d="M1.4 5.4H4.6" stroke-width="1.2"/><circle cx="10.8" cy="5.4" r="1.7" stroke-width="1.1"/></svg>
<svg style="left:1000px;top:226.6px" width="14" height="12" viewBox="0 0 14 12" fill="none" stroke="#ececec" stroke-width="1"><path d="M1.2 5.8L5.2 3 8.6 5.8 5.2 8.6Z"/><path d="M5.4 1.8L12.6 5.8 5.4 9.8" stroke-width="1.6"/></svg>
<svg style="left:964.6px;top:233px" width="8" height="20" viewBox="0 0 8 20" fill="none" stroke="#b8b8b8" stroke-width="0.9"><path d="M0.2 0.6H3.6V2.6M0.2 19H3.6V17"/><rect x="1.8" y="2.8" width="3.6" height="5.6" rx="1.6"/><rect x="1.8" y="11.2" width="3.6" height="5.6" rx="1.6"/><path d="M3.6 6.6V13"/></svg>
<div class="t lb" style="left:840.7px;top:247.6px">終了位置:</div>
<div class="dd" style="left:877px;top:245.8px;width:39.8px;height:16px"></div>
<div class="a" style="left:881.6px;top:253px;width:17.6px;height:1.2px;background:#ececec"></div>
<svg style="left:908.4px;top:249.2px" width="5" height="10" viewBox="0 0 5 10" fill="#e0e0e0"><path d="M0.5 4L2.4 1.2 4.3 4ZM0.5 5.8L2.4 8.6 4.3 5.8Z"/></svg>
<div class="a" style="left:919px;top:246.6px;width:41.6px;height:14.4px;border-radius:2px;background:#383838"></div>
<div class="t" style="left:922.6px;top:247.8px;color:#6c6c6c;font-size:8px;letter-spacing:-0.1px">100 %</div>
<svg style="left:954.8px;top:252.2px" width="5" height="4" viewBox="0 0 5 4" fill="#6a6a6a"><path d="M0.3 0.6H4.5L2.4 3.4Z"/></svg>
<svg style="left:982px;top:249.4px" width="12" height="10" viewBox="0 0 12 10" fill="none" stroke="#e8e8e8" stroke-width="1.1"><path d="M0.8 2.6H10.6M8 0.4L10.6 2.6 8 4.8M11 7.2H1.2M3.8 5L1.2 7.2 3.8 9.4"/></svg>
<svg style="left:1002px;top:248.2px" width="10" height="12" viewBox="0 0 10 12" fill="none" stroke="#d8d8d8" stroke-width="1"><path d="M0.4 2.4H9.2M3 2.2V0.8H6.6V2.2M1.4 2.6L1.8 11.2H7.8L8.2 2.6M3.4 4.4V9.6M4.8 4.4V9.6M6.2 4.4V9.6"/></svg>
<div class="hl" style="left:841px;top:266.4px;width:176px;background:#2e2e2e"></div>
<!-- props row -->
<div class="dd" style="left:843.2px;top:277.2px;width:70.6px;height:11.6px;background:#565656"></div>
<div class="t lb" style="left:843.2px;top:277px;width:70.6px;text-align:center;transform-origin:50% 50%">プロパティ...</div>
<div class="t lb" style="left:955.2px;top:276.2px">筆圧:</div>
<div class="a" style="left:974.4px;top:276px;width:42.2px;height:11.8px;border-radius:2px;background:#646464"></div>
<div class="a" style="left:836px;top:300px;width:188px;height:1.6px;background:#1a1a1a"></div>
<!--/RP1-->
<!--RP2-->
<div class="ph" style="top:301.6px;height:18.8px"></div>
<div class="a" style="left:841.4px;top:305.6px;width:2.2px;height:11.4px;border-radius:1px;background:#4d4d4d"></div>
<div class="tabsel" style="left:848.6px;top:304.3px;width:38px;height:13.3px"></div>
<div class="t tb b" style="left:853.4px;top:305.4px;color:#fff">レイヤー</div>
<div class="t tb" style="left:898.4px;top:305.4px;color:#b4b4b4">パス</div>
<div class="t tb" style="left:929.8px;top:305.4px;color:#b4b4b4">エフェク</div>
<div class="t tb" style="left:969px;top:305.4px;color:#b4b4b4;transform:scaleX(.89)">スタイル</div>
<div class="a mb" style="left:1006.2px;top:305.6px"></div>
<svg style="left:1008.6px;top:308.8px" width="8" height="6" viewBox="0 0 8 6" fill="none" stroke="#f0f0f0" stroke-width="1.4"><path d="M0.9 0.8L3.6 4.4 6.3 0.8"/></svg>
<!-- opacity row -->
<div class="t" style="left:839.4px;top:329px;color:#e4e4e4;font-weight:500;font-size:7.6px;letter-spacing:0px">不透明度:</div>
<div class="inp" style="left:873.2px;top:326.5px;width:31.6px;height:14px;background:#212121;border-radius:2px 0 0 2px"></div>
<div class="a" style="left:904.8px;top:326.5px;width:8.2px;height:14px;background:#242424;border-radius:0 2px 2px 0"></div>
<div class="t b" style="left:875px;top:327.8px;color:#f4f4f4;font-size:8.7px;letter-spacing:-0.3px">100 %</div>
<svg style="left:906.2px;top:331.4px" width="5.2" height="4.4" viewBox="0 0 6 5" fill="none" stroke="#d8d8d8" stroke-width="1.6"><path d="M0.9 1L2.8 3.1 4.7 1"/></svg>
<div class="dd" style="left:915.6px;top:326.5px;width:74.2px;height:14px"></div>
<div class="t tb b" style="left:918.8px;top:328px;color:#f0f0f0">標準</div>
<svg style="left:982px;top:328.6px" width="5" height="10" viewBox="0 0 5 10" fill="#e0e0e0"><path d="M0.5 4L2.4 1.2 4.3 4ZM0.5 5.8L2.4 8.6 4.3 5.8Z"/></svg>
<svg style="left:994.6px;top:328.2px" width="10" height="10" viewBox="-5 -5 10 10"><g fill="#e8e8e8"><circle r="3.4"/><g id="gt2"><rect x="-1" y="-4.8" width="2" height="9.6" rx="0.4"/></g><use href="#gt2" transform="rotate(45)"/><use href="#gt2" transform="rotate(90)"/><use href="#gt2" transform="rotate(135)"/></g><circle r="1.5" fill="#333"/></svg>
<svg style="left:1009.6px;top:328px" width="8" height="10" viewBox="0 0 8 10"><rect x="0.4" y="4" width="6.6" height="5.4" rx="0.8" fill="#bdbdbd"/><path d="M1.8 4V2.8C1.8 1.4 2.6 0.7 3.7 0.7 4.8 0.7 5.6 1.4 5.6 2.8V4" fill="none" stroke="#bdbdbd" stroke-width="1"/></svg>
<!-- layer rows -->
<div class="a" style="left:836px;top:344.8px;width:188px;height:26.8px;background:#2f64c8"></div>
<div class="a" style="left:847.2px;top:344.8px;width:26.8px;height:26.8px;background:#2b2b2b"></div>
<div class="a" style="left:1000px;top:344.8px;width:1px;height:26.8px;background:#25345a"></div>
<svg style="left:838.4px;top:353.6px" width="6" height="10" viewBox="0 0 7 11" fill="none" stroke="#8ea6d4" stroke-width="0.8"><path d="M2.6 0.6V10.4M2.6 5.5L6 1M2.6 5.5L6 10M0.4 3L2.6 5.5 0.4 8"/></svg>
<svg style="left:847.2px;top:345.5px" width="27" height="26" viewBox="0 0 27 26" fill="none"><path d="M1 12.6C4 10.6 7 10.6 10 12.4 13 14 16 13.6 19 12.8 22 12.4 24 13 26.4 13.4" stroke="#1e1e1e" stroke-width="0.9"/></svg>
<div class="t tb" style="left:881.2px;top:352.8px;color:#6488d4;font-style:italic">カーブ</div>
<svg style="left:1008.4px;top:355.6px" width="7" height="4.6" viewBox="0 0 9 6"><path d="M0.2 2.9C1.6 0.8 3 0.1 4.5 0.1 6 0.1 7.4 0.8 8.8 2.9 7.4 5 6 5.7 4.5 5.7 3 5.7 1.6 5 0.2 2.9Z" fill="#fff"/><circle cx="4.5" cy="2.9" r="1.4" fill="#2f64c8"/></svg>
<div class="a" style="left:836px;top:371.5px;width:188px;height:1.2px;background:#2a2a2a"></div>
<div class="a" style="left:836px;top:372.7px;width:188px;height:25px;background:#3a3a3a"></div>
<div class="a" style="left:836px;top:372.7px;width:11.2px;height:25px;background:#3f3f3f"></div>
<div class="a" style="left:847.2px;top:372.7px;width:26.8px;height:25px;background:#2b2b2b"></div>
<div class="a" style="left:1000px;top:372.7px;width:1px;height:25px;background:#282828"></div>
<svg style="left:838.4px;top:380.2px" width="6" height="10" viewBox="0 0 7 11" fill="none" stroke="#b4b4b4" stroke-width="0.9"><path d="M2.6 0.6V10.4M2.6 5.5L6 1M2.6 5.5L6 10M0.4 3L2.6 5.5 0.4 8"/></svg>
<div class="a" style="left:848px;top:384px;width:25.6px;height:1px;background:#212121"></div>
<div class="t tb" style="left:881.2px;top:379.4px;color:#676767;font-style:italic">カーブ</div>
<svg style="left:1008.4px;top:382.2px" width="7" height="4.6" viewBox="0 0 9 6"><path d="M0.2 2.9C1.6 0.8 3 0.1 4.5 0.1 6 0.1 7.4 0.8 8.8 2.9 7.4 5 6 5.7 4.5 5.7 3 5.7 1.6 5 0.2 2.9Z" fill="#fff"/><circle cx="4.5" cy="2.9" r="1.4" fill="#3a3a3a"/></svg>
<div class="a" style="left:836px;top:397.7px;width:188px;height:43px;background:#1b1b1b"></div>
<!-- layer toolbar -->
<div class="a" style="left:836px;top:440.7px;width:188px;height:23.8px;background:#353535"></div>
<svg style="left:840px;top:447px" width="13" height="13" viewBox="0 0 13 13" fill="none" stroke="#8c8c8c" stroke-width="1"><path d="M8 1.6H1V12H11.4V5.4"/><path d="M4.4 8.6L5 6.4 10.6 0.8 12.2 2.4 6.6 8Z"/></svg>
<div class="a" style="left:878.3px;top:447.6px;width:12px;height:11.6px;background:#e0e0e0;border-radius:1px"></div>
<div class="t b" style="left:878.3px;top:447.4px;width:12px;text-align:center;color:#222;font-size:8.4px;letter-spacing:-0.9px;text-indent:-0.6px">FX</div>
<svg style="left:894px;top:447.6px" width="12.4" height="11.6" viewBox="0 0 12.4 11.6"><rect width="12.4" height="11.6" rx="1" fill="#e0e0e0"/><circle cx="6.2" cy="5.8" r="3.3" fill="#2a2a2a"/></svg>
<svg style="left:910.4px;top:447.6px" width="10.4" height="11.6" viewBox="0 0 10.4 11.6"><path d="M0.2 0.2H10.2C10.2 3.6 7.6 4.6 7.2 5.8 7.6 7 10.2 8 10.2 11.4H0.2C0.2 8 2.8 7 3.2 5.8 2.8 4.6 0.2 3.6 0.2 0.2Z" fill="#e0e0e0"/></svg>
<svg style="left:925px;top:447.4px" width="12" height="12" viewBox="0 0 12 12"><circle cx="6" cy="6" r="5.2" fill="#e0e0e0" stroke="#d0d0d0" stroke-width="0.9"/><path d="M2.2 9.8A5.3 5.3 0 0 1 9.8 2.2Z" fill="#353535"/></svg>
<svg style="left:959.6px;top:447.4px" width="12" height="12" viewBox="0 0 12 12"><rect x="0.5" y="0.5" width="11" height="11" fill="none" stroke="#d8d8d8" stroke-width="1"/><circle cx="5.2" cy="5" r="3.1" fill="#e4e4e4"/><rect x="5.4" y="5.6" width="4.6" height="4.4" fill="#9a9a9a"/></svg>
<svg style="left:975.4px;top:448.6px" width="13" height="11" viewBox="0 0 13 11" fill="none" stroke="#b4b4b4" stroke-width="1"><path d="M0.6 10.2V0.8H4.6L5.8 2.4H12V10.2Z"/><path d="M0.6 3.6H12"/></svg>
<svg style="left:991px;top:447.7px" width="11.3" height="11.3" viewBox="0 0 5 5" fill="#dcdcdc"><path d="M0 0h1v1h-1zM2 0h1v1h-1zM4 0h1v1h-1zM1 1h1v1h-1zM3 1h1v1h-1zM0 2h1v1h-1zM2 2h1v1h-1zM4 2h1v1h-1zM1 3h1v1h-1zM3 3h1v1h-1zM0 4h1v1h-1zM2 4h1v1h-1zM4 4h1v1h-1z"/></svg>
<svg style="left:1007.6px;top:447px" width="10" height="13" viewBox="0 0 10 13" fill="none" stroke="#b8b8b8" stroke-width="0.9"><path d="M0.4 2.6H9.4M3.2 2.4V0.8H6.6V2.4M1.4 2.8L1.8 12.2H8L8.4 2.8M3.6 4.8V10.4M4.9 4.8V10.4M6.2 4.8V10.4"/></svg>
<div class="a" style="left:836px;top:464.4px;width:188px;height:1.2px;background:#1c1c1c"></div>
<!--/RP2-->
<!--RP3-->
<div class="ph" style="top:465.4px;height:20.2px"></div>
<div class="a" style="left:841.4px;top:470px;width:2.2px;height:11.4px;border-radius:1px;background:#4d4d4d"></div>
<div class="tabsel" style="left:848.6px;top:469.2px;width:23.4px;height:13.2px"></div>
<div class="t tb b" style="left:852.6px;top:470.2px;color:#fff">変形</div>
<div class="t tb" style="left:877.2px;top:470.2px;color:#b4b4b4">ナビゲータ</div>
<div class="t tb" style="left:922.2px;top:470.2px;color:#9a9a9a">履歴</div>
<div class="a mb" style="left:1006.2px;top:470.6px;height:10.8px"></div>
<svg style="left:1008.6px;top:473.4px" width="8" height="6" viewBox="0 0 8 6" fill="none" stroke="#f0f0f0" stroke-width="1.4"><path d="M0.9 0.8L3.6 4.4 6.3 0.8"/></svg>
<!-- anchor -->
<div class="a" style="left:850.5px;top:506.2px;width:23.2px;height:22.8px;background:#6c6c6c"></div>
<div class="a ad" style="left:860.1px;top:504.4px"></div><div class="a ad" style="left:871.9px;top:504.4px"></div>
<div class="a ad" style="left:848.2px;top:516.2px"></div><div class="a ad" style="left:860.1px;top:516.2px"></div><div class="a ad" style="left:871.9px;top:516.2px"></div>
<div class="a ad" style="left:848.2px;top:527.6px"></div><div class="a ad" style="left:860.1px;top:527.6px"></div><div class="a ad" style="left:871.9px;top:527.6px"></div>
<div class="a" style="left:846.8px;top:503px;width:6.8px;height:6.8px;background:#fff"></div>
<!-- fields -->
<div class="t b" style="left:891.8px;top:497.6px;color:#d6d6d6;font-size:8.3px;-webkit-text-stroke:0.3px #d6d6d6;font-weight:normal">X:</div>
<div class="inp" style="left:902.4px;top:496.6px;width:41.8px;height:12.8px;background:#1f1f1f"></div>
<div class="t md" style="left:903.7px;top:497.4px;color:#f4f4f4;font-size:8.7px;letter-spacing:-0.1px">170.8 mm</div>
<div class="t b" style="left:891.8px;top:512.6px;color:#d6d6d6;font-size:8.3px;-webkit-text-stroke:0.3px #d6d6d6;font-weight:normal">Y:</div>
<div class="inp" style="left:902.4px;top:511.8px;width:41.8px;height:13.2px;background:#1f1f1f"></div>
<div class="t md" style="left:903.7px;top:512.6px;color:#f4f4f4;font-size:8.7px;letter-spacing:-0.1px">141 mm</div>
<div class="t b" style="left:951.8px;top:497.6px;color:#d6d6d6;font-size:8.3px;-webkit-text-stroke:0.3px #d6d6d6;font-weight:normal">W:</div>
<div class="a" style="left:964.5px;top:496.6px;width:42.6px;height:12.8px;border-radius:2px;background:#373737"></div>
<div class="t" style="left:966.6px;top:497.2px;color:#6a6a6a;font-size:8.8px">0 mm</div>
<div class="t b" style="left:953.4px;top:512.6px;color:#d6d6d6;font-size:8.3px;-webkit-text-stroke:0.3px #d6d6d6;font-weight:normal">H:</div>
<div class="a" style="left:964.5px;top:511.8px;width:42.6px;height:13.2px;border-radius:2px;background:#373737"></div>
<div class="t" style="left:966.6px;top:512.4px;color:#6a6a6a;font-size:8.8px">0 mm</div>
<svg style="left:1011px;top:502.6px" width="7" height="15" viewBox="0 0 7 15" fill="none" stroke="#b0b0b0" stroke-width="0.9"><path d="M1.2 6V1.8C1.2 1 1.8 0.5 2.6 0.5H4.4C5.2 0.5 5.8 1 5.8 1.8V6M1.2 9V13.2C1.2 14 1.8 14.5 2.6 14.5H4.4C5.2 14.5 5.8 14 5.8 13.2V9M0 6H7M0 9H7"/></svg>
<div class="t b" style="left:891.8px;top:531.4px;color:#d6d6d6;font-size:8.3px;-webkit-text-stroke:0.3px #d6d6d6;font-weight:normal">R:</div>
<div class="a" style="left:902.4px;top:530.6px;width:41.8px;height:12.6px;border-radius:2px;background:#373737"></div>
<div class="t" style="left:904.2px;top:531px;color:#6a6a6a;font-size:8.8px">0 °</div>
<svg style="left:937.6px;top:535.4px" width="5" height="4" viewBox="0 0 5 4" fill="#747474"><path d="M0.3 0.6H4.5L2.4 3.4Z"/></svg>
<div class="t b" style="left:954.4px;top:531.4px;color:#d6d6d6;font-size:8.3px;-webkit-text-stroke:0.3px #d6d6d6;font-weight:normal">S:</div>
<div class="a" style="left:964.5px;top:530.6px;width:42.6px;height:12.6px;border-radius:2px;background:#373737"></div>
<div class="t" style="left:966.6px;top:531px;color:#6a6a6a;font-size:8.8px">0 °</div>
<svg style="left:1000.4px;top:535.4px" width="5" height="4" viewBox="0 0 5 4" fill="#747474"><path d="M0.3 0.6H4.5L2.4 3.4Z"/></svg>
<svg style="left:983.6px;top:550px" width="11" height="10" viewBox="0 0 11 10" fill="none" stroke="#e0e0e0" stroke-width="1"><path d="M0.6 3.6V0.6H3.6M6 0.6H9.8V3.6M9.8 6V9.4H7.4"/><rect x="0.4" y="4.8" width="5.6" height="4.8" rx="0.8" fill="#f0f0f0" stroke="none"/></svg>
<svg style="left:1001.4px;top:552.6px" width="6" height="5" viewBox="0 0 6 5" fill="#d8d8d8"><path d="M0.4 0.8H5.2L2.8 4.2Z"/></svg>
<!--/RP3-->
</body>
</html>
